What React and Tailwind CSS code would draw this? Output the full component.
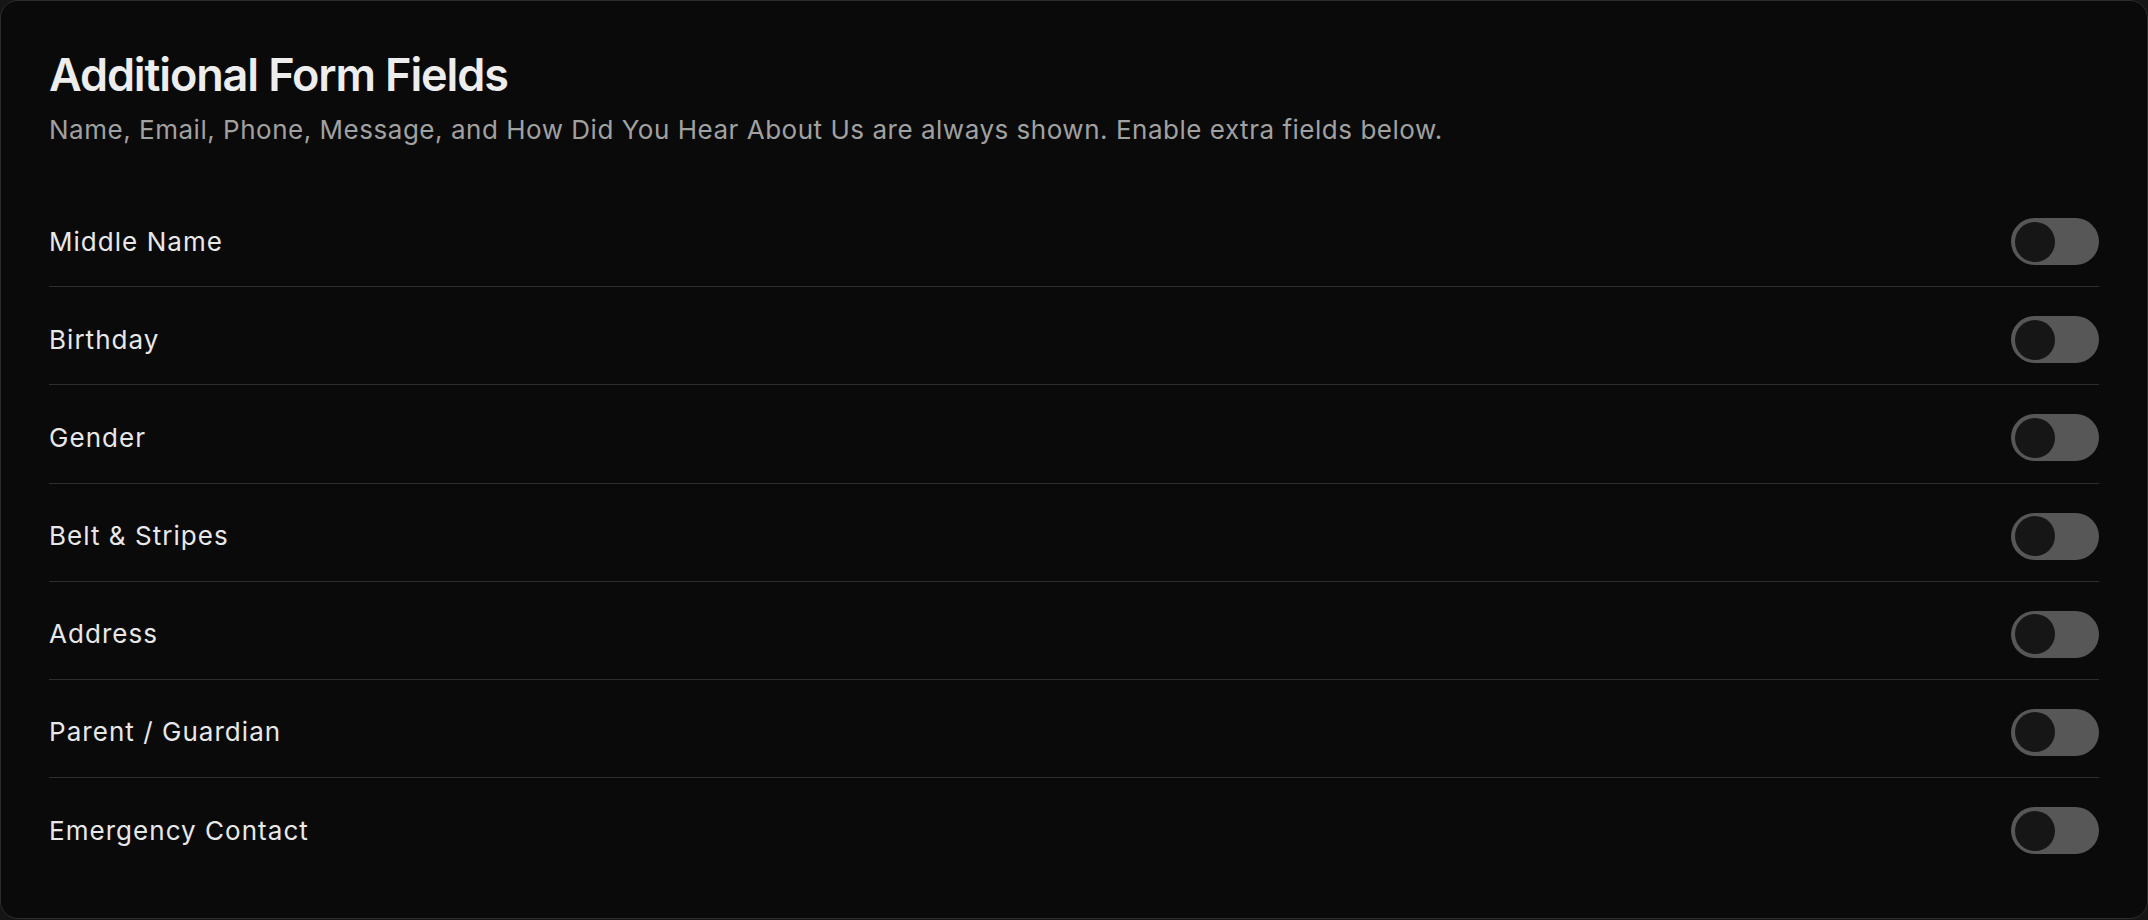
import { useState } from "react";

const FIELDS = [
  "Middle Name",
  "Birthday",
  "Gender",
  "Belt & Stripes",
  "Address",
  "Parent / Guardian",
  "Emergency Contact",
];

function Toggle({ on, onChange }) {
  return (
    <button
      type="button"
      role="switch"
      aria-checked={on}
      onClick={() => onChange(!on)}
      className={`relative flex h-[47px] w-[88px] shrink-0 items-center rounded-full px-[4px] ${on ? "bg-[#e5e5e5]" : "bg-[#575757]"}`}
    >
      <span
        className={`block h-[40px] w-[40px] rounded-full bg-[#161616] ${on ? "translate-x-[40px]" : ""}`}
      />
    </button>
  );
}

export default function App() {
  const [enabled, setEnabled] = useState({});

  return (
    <div className="min-h-screen bg-[#151515]" style={{ fontFamily: "Inter, 'Noto Sans', sans-serif" }}>
      <div className="rounded-[18px] border-[1.5px] border-[#2c2c2c] bg-[#0a0a0a] px-[48px] pt-[47px] pb-[43px]">
        <h2 className="text-[45px] font-semibold leading-[54px] tracking-tight text-[#ededed]">
          Additional Form Fields
        </h2>
        <p className="mt-[10px] text-[26px] leading-[36px] tracking-[0.02em] text-[#a1a1a1]">
          Name, Email, Phone, Message, and How Did You Hear About Us are always shown. Enable extra fields below.
        </p>

        <div className="mt-[41px]">
          {FIELDS.map((f, i) => (
            <div
              key={f}
              className={`flex items-center justify-between pt-[29px] pb-[21.2px] ${i < FIELDS.length - 1 ? "border-b-[1.5px] border-[#2e2e2e]" : ""}`}
            >
              <span className="text-[26px] leading-[36px] tracking-[0.04em] text-[#e8e8e8]">{f}</span>
              <Toggle on={!!enabled[f]} onChange={(v) => setEnabled((s) => ({ ...s, [f]: v }))} />
            </div>
          ))}
        </div>
      </div>
    </div>
  );
}
